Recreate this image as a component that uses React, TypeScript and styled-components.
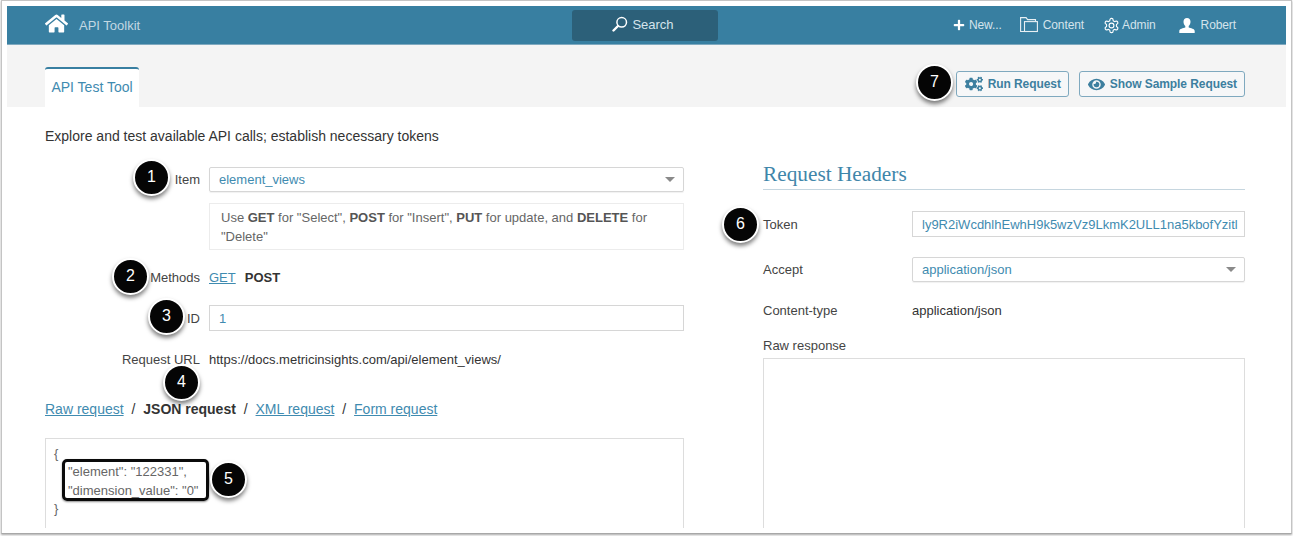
import React from "react";
import styled, { createGlobalStyle } from "styled-components";
import { FaCogs, FaEye, FaHome, FaPlus } from "react-icons/fa";

const Global = createGlobalStyle`
  html, body { margin: 0; padding: 0; background: #fff; height: 536px; overflow: hidden; }
  body { font-family: "Liberation Sans", Arial, sans-serif; font-size: 13px; color: #333; }
  * { box-sizing: border-box; }
`;

const Shot = styled.div`
  width: 1291px;
  height: 534px;
  margin-left: 1px;
  padding: 5px 5px 0 5px;
  background: #fff;
  border: 1px solid #c4c4c4;
  border-bottom-color: #a8a8a8;
  box-shadow: 0 1px 2px rgba(0, 0, 0, 0.35);
`;
const Frame = styled.div`
  height: 527px;
  position: relative;
  overflow: hidden;
  background: #fff;
`;
const Header = styled.header`
  height: 39px;
  background: #387fa1;
  border-bottom: 1px solid #7fa9bf;
  display: grid;
  grid-template-columns: 565px 146px 1fr;
  align-items: center;
  color: #d5e4ec;
`;
const Brand = styled.div`
  display: flex;
  align-items: center;
  padding-left: 38px;
  font-size: 13px;
  color: #c3d8e3;
  svg { color: #fff; font-size: 23px; margin-right: 11px; margin-top: -4px; }
`;
const SearchBox = styled.div`
  height: 31px;
  background: #2c6079;
  border-radius: 3px;
  display: flex;
  align-items: center;
  justify-content: center;
  gap: 4px;
  padding: 0 4px 2px 0;
  font-size: 13px;
  color: #d5e4ec;
`;
const Nav = styled.nav`
  display: flex;
  justify-content: flex-end;
  align-items: center;
  padding-right: 50px;
`;
const NavItem = styled.span<{ $gap?: number; $ml?: number }>`
  display: flex;
  align-items: center;
  font-size: 12px;
  letter-spacing: -0.1px;
  gap: ${(p) => p.$gap ?? 3}px;
  margin-left: ${(p) => p.$ml ?? 0}px;
  color: #d5e4ec;
  svg { color: #fff; flex: none; }
`;
const Toolbar = styled.div`
  height: 62px;
  background: #f4f4f4;
  display: flex;
  justify-content: space-between;
  align-items: flex-end;
  padding: 0 41px 0 38px;
`;
const Tab = styled.div`
  width: 94px;
  height: 40px;
  background: #fff;
  border-top: 2px solid #387fa1;
  border-radius: 3px 3px 0 0;
  color: #3f8bb0;
  font-size: 14px;
  display: flex;
  align-items: center;
  justify-content: center;
  padding-bottom: 2px;
`;
const Actions = styled.div`
  display: flex;
  gap: 10px;
  align-self: flex-start;
  margin-top: 26px;
`;
const ActionButton = styled.button`
  height: 26px;
  padding: 0 7px 0 8px;
  border: 1px solid #7fa9bf;
  border-radius: 3px;
  background: #f6f7f8;
  color: #3d7f9f;
  font: bold 12px "Liberation Sans", Arial, sans-serif;
  letter-spacing: -0.08px;
  display: flex;
  align-items: center;
  gap: 5px;
  svg { flex: none; }
`;
const Intro = styled.p`
  margin: 22px 0 0 38px;
  font-size: 14px;
  line-height: 15px;
  color: #333;
`;
const Columns = styled.div`
  display: grid;
  grid-template-columns: 639px 482px;
  column-gap: 79px;
  padding: 10px 0 0 38px;
  margin-top: 13px;
  height: 371px;
  overflow: hidden;
`;
const Column = styled.section``;
const Row = styled.div<{ $mt?: number; $h?: number }>`
  display: grid;
  grid-template-columns: 155px 1fr;
  column-gap: 9px;
  align-items: center;
  margin-top: ${(p) => p.$mt ?? 0}px;
  min-height: ${(p) => p.$h ?? 0}px;
  font-size: 13px;
`;
const Label = styled.label`
  text-align: right;
  font-size: 13px;
  color: #444;
`;
const Select = styled.div`
  height: 25px;
  border: 1px solid #d6d6d6;
  border-radius: 2px;
  color: #3f8bb0;
  display: flex;
  align-items: center;
  justify-content: space-between;
  padding: 0 8px 0 9px;
  font-size: 13px;
  box-shadow: 0 1px 1px rgba(0, 0, 0, 0.06);
`;
const Caret = styled.i`
  width: 0;
  height: 0;
  border-left: 5px solid transparent;
  border-right: 5px solid transparent;
  border-top: 5px solid #8a8a8a;
`;
const Help = styled.div`
  margin: 11px 0 0 164px;
  height: 47px;
  border: 1px solid #ececec;
  padding: 4px 10px 0 11px;
  font-size: 13px;
  line-height: 19px;
  color: #666;
  b { color: #555; }
`;
const Methods = styled.div`
  display: flex;
  gap: 9px;
  font-size: 13px;
  a { color: #3f8bb0; text-decoration: underline; }
  b { color: #333; }
`;
const Input = styled.div<{ $h?: number }>`
  height: ${(p) => p.$h ?? 26}px;
  border: 1px solid #d6d6d6;
  color: #3f8bb0;
  display: flex;
  align-items: center;
  padding: 0 8px 0 9px;
  font-size: 13px;
  white-space: nowrap;
  overflow: hidden;
`;
const Plain = styled.span`
  font-size: 13px;
  color: #333;
`;
const Links = styled.div`
  margin-top: 34px;
  font-size: 14px;
  line-height: 17px;
  display: flex;
  gap: 7.9px;
  a { color: #3f8bb0; text-decoration: underline; }
  b { color: #333; }
`;
const Code = styled.div`
  margin: 20px 0 0;
  height: 120px;
  border: 1px solid #ddd;
  padding: 6px 0 0 8px;
  font: 13px/18.4px "Liberation Sans", Arial, sans-serif;
  color: #666;
  position: relative;
`;
const CodeLine = styled.div<{ $indent?: boolean }>`
  padding-left: ${(p) => (p.$indent ? 14 : 0)}px;
`;
const Highlight = styled.div`
  position: absolute;
  left: 16px;
  top: 20px;
  width: 147px;
  height: 42px;
  border: 3px solid #0b0b0b;
  border-radius: 5px;
  box-shadow: 0 1px 2px rgba(0, 0, 0, 0.45);
`;
const Heading = styled.h2`
  margin: -8px 0 0;
  height: 31px;
  border-bottom: 1px solid #c6d6df;
  font: 21.3px/30px "Liberation Serif", "Times New Roman", serif;
  color: #3f86aa;
`;
const HeaderRow = styled.div<{ $mt?: number; $h?: number }>`
  display: grid;
  grid-template-columns: 149px 1fr;
  align-items: center;
  margin-top: ${(p) => p.$mt ?? 0}px;
  min-height: ${(p) => p.$h ?? 0}px;
  font-size: 13px;
  color: #444;
`;
const RawLabel = styled.div`
  margin-top: 20px;
  font-size: 13px;
  line-height: 15px;
  color: #444;
`;
const RawBox = styled.div`
  margin-top: 5px;
  height: 200px;
  border: 1px solid #ddd;
`;
const Badge = styled.span<{ $x: number; $y: number }>`
  position: absolute;
  left: ${(p) => p.$x}px;
  top: ${(p) => p.$y}px;
  width: 33px;
  height: 33px;
  border-radius: 50%;
  background: #050505;
  color: #fff;
  border: 2px solid #fff;
  box-sizing: content-box;
  margin: -2px;
  box-shadow: 0 3px 4px rgba(0, 0, 0, 0.5);
  font: 16px/31px "Liberation Sans", Arial, sans-serif;
  text-align: center;
`;

const SearchIcon = () => (
  <svg width="16" height="16" viewBox="0 0 16 16" fill="none" stroke="#fff">
    <circle cx="9.7" cy="6.3" r="4.8" strokeWidth="1.5" />
    <path d="M6 10 L1.500 14.500" strokeWidth="2.4" strokeLinecap="round" />
  </svg>
);
const FolderIcon = () => (
  <svg width="18" height="16" viewBox="0 0 18 16" fill="none" stroke="#e8f0f4" strokeWidth="1.1">
    <path d="M4.500 14.500H.6V.6h5.500l1.500 2h7.900v2" />
    <rect x="4.500" y="4.600" width="12.900" height="9.900" />
  </svg>
);
const GearIcon = () => (
  <svg width="17" height="17" viewBox="0 0 24 24" fill="none" stroke="#fff" strokeWidth="1.6" strokeLinejoin="round">
    <path d="M12.22 2h-.44a2 2 0 0 0-2 2v.18a2 2 0 0 1-1 1.73l-.43.25a2 2 0 0 1-2 0l-.15-.08a2 2 0 0 0-2.73.73l-.22.38a2 2 0 0 0 .73 2.73l.15.1a2 2 0 0 1 1 1.72v.51a2 2 0 0 1-1 1.74l-.15.09a2 2 0 0 0-.73 2.73l.22.38a2 2 0 0 0 2.73.73l.15-.08a2 2 0 0 1 2 0l.43.25a2 2 0 0 1 1 1.73V20a2 2 0 0 0 2 2h.44a2 2 0 0 0 2-2v-.18a2 2 0 0 1 1-1.73l.43-.25a2 2 0 0 1 2 0l.15.08a2 2 0 0 0 2.73-.73l.22-.39a2 2 0 0 0-.73-2.73l-.15-.08a2 2 0 0 1-1-1.74v-.5a2 2 0 0 1 1-1.74l.15-.09a2 2 0 0 0 .73-2.73l-.22-.38a2 2 0 0 0-2.73-.73l-.15.08a2 2 0 0 1-2 0l-.43-.25a2 2 0 0 1-1-1.73V4a2 2 0 0 0-2-2z" />
    <circle cx="12" cy="12" r="3.4" />
  </svg>
);
const UserIcon = () => (
  <svg width="16" height="15" viewBox="0 0 16 15" fill="#fff">
    <path d="M8 0c2.200 0 3.500 1.600 3.500 3.800 0 1.700-.8 3.300-1.800 4.200v1.400c2 .6 6 1.200 6 3.600v2H.3v-2c0-2.400 4-3 6-3.600V8C5.300 7.100 4.500 5.500 4.500 3.800 4.500 1.600 5.800 0 8 0z" />
  </svg>
);

export default function App() {
  return (
    <>
      <Global />
      <Shot>
        <Frame>
          <Header>
            <Brand>
              <FaHome />
              API Toolkit
            </Brand>
            <SearchBox>
              <SearchIcon />
              Search
            </SearchBox>
            <Nav>
              <NavItem $gap={4}>
                <FaPlus size={12} />
                New...
              </NavItem>
              <NavItem $ml={18} $gap={5}>
                <FolderIcon />
                Content
              </NavItem>
              <NavItem $ml={19} $gap={2}>
                <GearIcon />
                Admin
              </NavItem>
              <NavItem $ml={23} $gap={6}>
                <UserIcon />
                Robert
              </NavItem>
            </Nav>
          </Header>
          <Toolbar>
            <Tab>API Test Tool</Tab>
            <Actions>
              <ActionButton>
                <FaCogs size={18} />
                Run Request
              </ActionButton>
              <ActionButton>
                <FaEye size={17} />
                Show Sample Request
              </ActionButton>
            </Actions>
          </Toolbar>
          <Intro>Explore and test available API calls; establish necessary tokens</Intro>
          <Columns>
            <Column>
              <Row>
                <Label>Item</Label>
                <Select>
                  element_views
                  <Caret />
                </Select>
              </Row>
              <Help>
                Use <b>GET</b> for "Select", <b>POST</b> for "Insert", <b>PUT</b> for update, and <b>DELETE</b> for
                <br />
                "Delete"
              </Help>
              <Row $mt={17} $h={20}>
                <Label>Methods</Label>
                <Methods>
                  <a>GET</a>
                  <b>POST</b>
                </Methods>
              </Row>
              <Row $mt={18}>
                <Label>ID</Label>
                <Input>1</Input>
              </Row>
              <Row $mt={20} $h={16}>
                <Label>Request URL</Label>
                <Plain>https://docs.metricinsights.com/api/element_views/</Plain>
              </Row>
              <Links>
                <a>Raw request</a>
                <span>/</span>
                <b>JSON request</b>
                <span>/</span>
                <a>XML request</a>
                <span>/</span>
                <a>Form request</a>
              </Links>
              <Code>
                <CodeLine>{"{"}</CodeLine>
                <CodeLine $indent>"element": "122331",</CodeLine>
                <CodeLine $indent>"dimension_value": "0"</CodeLine>
                <CodeLine>{"}"}</CodeLine>
                <Highlight />
              </Code>
            </Column>
            <Column>
              <Heading>Request Headers</Heading>
              <HeaderRow $mt={21} $h={26}>
                <span>Token</span>
                <Input>ly9R2iWcdhlhEwhH9k5wzVz9LkmK2ULL1na5kbofYzitl</Input>
              </HeaderRow>
              <HeaderRow $mt={20} $h={25}>
                <span>Accept</span>
                <Select>
                  application/json
                  <Caret />
                </Select>
              </HeaderRow>
              <HeaderRow $mt={20} $h={16}>
                <span>Content-type</span>
                <Plain>application/json</Plain>
              </HeaderRow>
              <RawLabel>Raw response</RawLabel>
              <RawBox />
            </Column>
          </Columns>
          <Badge $x={128} $y={155}>1</Badge>
          <Badge $x={107} $y={254}>2</Badge>
          <Badge $x={143} $y={294}>3</Badge>
          <Badge $x={158} $y={360}>4</Badge>
          <Badge $x={205} $y={457}>5</Badge>
          <Badge $x={717} $y={202}>6</Badge>
          <Badge $x={911} $y={60}>7</Badge>
        </Frame>
      </Shot>
    </>
  );
}
